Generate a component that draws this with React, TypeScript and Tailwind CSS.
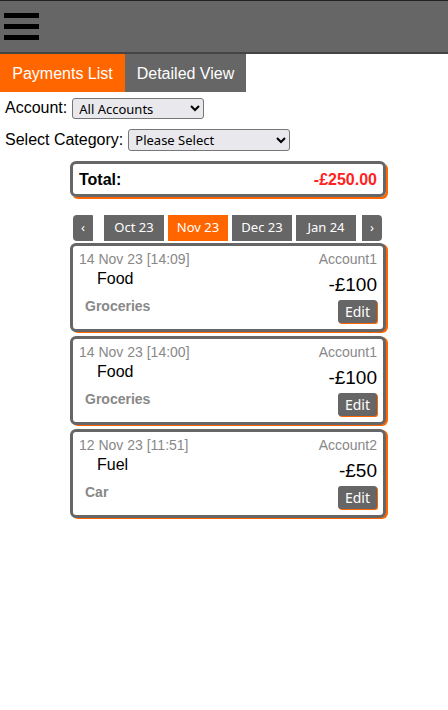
import React, { useState } from 'react';

interface Payment {
  date: string;
  time: string;
  account: string;
  name: string;
  amount: string;
  category: string;
}

const payments: Payment[] = [
  { date: '14 Nov 23', time: '14:09', account: 'Account1', name: 'Food', amount: '-£100', category: 'Groceries' },
  { date: '14 Nov 23', time: '14:00', account: 'Account1', name: 'Food', amount: '-£100', category: 'Groceries' },
  { date: '12 Nov 23', time: '11:51', account: 'Account2', name: 'Fuel', amount: '-£50', category: 'Car' },
];

const months = ['Oct 23', 'Nov 23', 'Dec 23', 'Jan 24'];

function PaymentCard({ p }: { p: Payment }) {
  return (
    <div className="w-[316px] h-[89px] border-[3px] border-[#666] rounded-[6px] shadow-[2px_1px_0_#ff6600] bg-white px-[6px] pt-[5px]">
      <div className="flex justify-between text-[14px] leading-[16px] text-[#888]">
        <span>{p.date} [{p.time}]</span>
        <span>{p.account}</span>
      </div>
      <div className="flex justify-between items-start mt-[2px]">
        <span className="pl-[18px] text-[16px] leading-[20px] text-black">{p.name}</span>
        <span className="text-[19px] leading-[22px] mt-[5px] text-black">{p.amount}</span>
      </div>
      <div className="flex justify-between items-start mt-[1px]">
        <span className="pl-[6px] pt-[1px] text-[14px] leading-[16px] font-bold text-[#888]">{p.category}</span>
        <button className="mt-[3px] h-[23px] px-[7px] rounded-[3px] bg-[#666] text-white text-[14px] shadow-[1px_1px_0_#ff6600] font-['Noto_Sans',sans-serif]">
          Edit
        </button>
      </div>
    </div>
  );
}

export default function App() {
  const [tab, setTab] = useState(0);
  const [month, setMonth] = useState(1);

  return (
    <div className="w-[448px] h-[710px] bg-white font-['Liberation_Sans',Arial,sans-serif] text-black">
      {/* Header */}
      <div className="h-[54px] bg-[#666] border-t border-t-[#222] border-b-2 border-b-[#444] flex flex-col gap-[6px] pt-[12px] pl-[4px]">
        <div className="w-[35px] h-[5px] bg-black" />
        <div className="w-[35px] h-[5px] bg-black" />
        <div className="w-[35px] h-[5px] bg-black" />
      </div>

      {/* Tabs */}
      <div className="flex h-[38px]">
        <button
          onClick={() => setTab(0)}
          className={`w-[125px] pt-[2px] text-white text-[16px] ${tab === 0 ? 'bg-[#ff6600]' : 'bg-[#666]'}`}
        >
          Payments List
        </button>
        <button
          onClick={() => setTab(1)}
          className={`w-[121px] pt-[2px] text-white text-[16px] ${tab === 1 ? 'bg-[#ff6600]' : 'bg-[#666]'}`}
        >
          Detailed View
        </button>
      </div>

      {/* Filters */}
      <div className="pl-[5px] pt-[5px]">
        <div className="flex items-center h-[22px]">
          <span className="text-[16px]">Account:</span>
          <select className="ml-[5px] w-[132px] h-[21px] border border-[#767676] rounded-[3px] bg-[#e9e9ed] text-[13px] pl-[2px] font-['Noto_Sans',sans-serif]">
            <option>All Accounts</option>
          </select>
        </div>
        <div className="flex items-center h-[22px] mt-[10px]">
          <span className="text-[16px]">Select Category:</span>
          <select className="ml-[5px] w-[162px] h-[22px] border border-[#767676] rounded-[3px] bg-[#e9e9ed] text-[13px] pl-[2px] font-['Noto_Sans',sans-serif]">
            <option>Please Select</option>
          </select>
        </div>
      </div>

      <div className="ml-[70px] mt-[10px]">
        {/* Total */}
        <div className="w-[316px] h-[36px] border-[3px] border-[#666] rounded-[6px] shadow-[2px_2px_0_#ff6600] flex items-center justify-between px-[6px] pt-[1px]">
          <span className="font-bold text-[16px]">Total:</span>
          <span className="font-bold text-[16px] text-[#ff2222]">-£250.00</span>
        </div>

        {/* Month nav */}
        <div className="flex mt-[18px] ml-[3px] h-[26px] text-white text-[13px] font-['Noto_Sans',sans-serif]">
          <button className="w-[20px] bg-[#666] rounded-l-[4px] rounded-tr-[1px]">‹</button>
          {months.map((m, i) => (
            <button
              key={m}
              onClick={() => setMonth(i)}
              className={`w-[60px] ${i === 0 ? 'ml-[11px]' : 'ml-[4px]'} ${month === i ? 'bg-[#ff6600]' : 'bg-[#666]'}`}
            >
              {m}
            </button>
          ))}
          <button className="w-[20px] ml-[6px] bg-[#666] rounded-r-[4px]">›</button>
        </div>

        {/* Payments */}
        <div className="flex flex-col gap-[4px] mt-[2px]">
          {payments.map((p, i) => (
            <PaymentCard key={i} p={p} />
          ))}
        </div>
      </div>
    </div>
  );
}
